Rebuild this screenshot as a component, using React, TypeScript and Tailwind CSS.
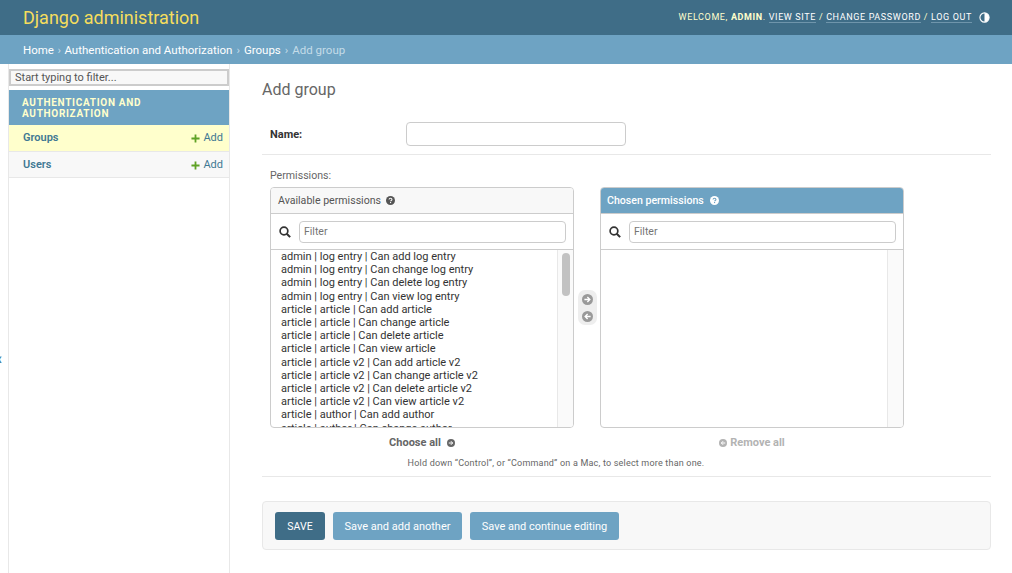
import React from 'react';

const PERMISSIONS = [
    'admin | log entry | Can add log entry',
    'admin | log entry | Can change log entry',
    'admin | log entry | Can delete log entry',
    'admin | log entry | Can view log entry',
    'article | article | Can add article',
    'article | article | Can change article',
    'article | article | Can delete article',
    'article | article | Can view article',
    'article | article v2 | Can add article v2',
    'article | article v2 | Can change article v2',
    'article | article v2 | Can delete article v2',
    'article | article v2 | Can view article v2',
    'article | author | Can add author',
    'article | author | Can change author',
];

const HelpIcon = ({ className }: { className: string }) => (
    <svg viewBox="0 0 16 16" className={className}>
        <circle cx="8" cy="8" r="8" fill="currentColor" />
        <path d="M5.4 6.2C5.5 4.7 6.6 4 8 4c1.5 0 2.6.8 2.6 2.1 0 1.9-2.2 1.8-2.2 3.3" fill="none" stroke="var(--hole)" strokeWidth="1.9" />
        <rect x="7.1" y="10.6" width="2" height="2" fill="var(--hole)" />
    </svg>
);

const ArrowCircle = ({ dir, className }: { dir: 'right' | 'left'; className: string }) => (
    <svg viewBox="0 0 16 16" className={className}>
        <circle cx="8" cy="8" r="8" fill="currentColor" />
        <path
            d={dir === 'right' ? 'M3.5 8h7.5M7.8 4.4 11.4 8l-3.6 3.6' : 'M12.5 8H5M8.2 4.4 4.6 8l3.6 3.6'}
            fill="none"
            stroke="#ffffff"
            strokeWidth="2"
        />
    </svg>
);

const SearchIcon = () => (
    <svg viewBox="0 0 14 14" className="w-[12px] h-[12px] shrink-0 text-[#333]">
        <circle cx="5.8" cy="5.8" r="4.5" fill="none" stroke="currentColor" strokeWidth="2" />
        <path d="M9 9l4 4" fill="none" stroke="currentColor" strokeWidth="2.4" />
    </svg>
);

const PlusIcon = () => (
    <svg viewBox="0 0 10 10" className="w-[9px] h-[9px]">
        <path d="M5 .5v9M.5 5h9" fill="none" stroke="#5fa225" strokeWidth="2" />
    </svg>
);

const NavRow = ({ name, active }: { name: string; active?: boolean }) => (
    <div className={`flex items-center justify-between pl-[14px] pr-[6px] border-b border-[#e8e8e8] text-[11px] ${active ? 'h-[27px] bg-[#ffffcc]' : 'h-[26px] pt-[1px] bg-[#f8f8f8]'}`}>
        <span className="font-semibold text-[#417893]">{name}</span>
        <span className="flex items-center gap-[3px] text-[#417893]">
            <PlusIcon />
            Add
        </span>
    </div>
);

const FilterRow = () => (
    <div className="flex items-center h-[36px] pl-[8px] pr-[7px] gap-[8px] border-b border-[#cccccc]">
        <SearchIcon />
        <div className="flex-1 h-[22px] flex items-center pl-[4px] border border-[#cccccc] rounded-[4px] text-[10.5px] text-[#757575]">Filter</div>
    </div>
);

const Scrollbar = ({ thumb }: { thumb?: boolean }) => (
    <div className="w-[16px] shrink-0 bg-[#fafafa] border-l border-[#e8e8e8] pt-[3px] pl-[4px]">
        {thumb && <div className="w-[8px] h-[43px] rounded-full bg-[#c2c2c2]" />}
    </div>
);

export default function App() {
    return (
        <div className="h-screen overflow-hidden bg-white text-[#333] font-['Roboto','Liberation_Sans',sans-serif] flex flex-col">
            <header className="h-[35px] shrink-0 bg-[#3f6d87] flex items-center justify-between pl-[23px] pr-[22px]">
                <div className="text-[18px] text-[#f5dd5d] leading-none">Django administration</div>
                <div className="flex items-center gap-[7px] text-[9px] tracking-[0.63px] text-[#ffffcc] uppercase">
                    <div>
                        Welcome, <b className="font-bold">admin</b>.{' '}
                        <span className="text-white border-b border-[#6f95ab]">View site</span> /{' '}
                        <span className="text-white border-b border-[#6f95ab]">Change password</span> /{' '}
                        <span className="text-white border-b border-[#6f95ab]">Log out</span>
                    </div>
                    <svg viewBox="0 0 12 12" className="w-[11px] h-[11px]">
                        <circle cx="6" cy="6" r="5" fill="none" stroke="#ffffff" strokeWidth="1.2" />
                        <path d="M6 1a5 5 0 0 1 0 10z" fill="#ffffff" />
                    </svg>
                </div>
            </header>

            <div className="h-[29px] shrink-0 bg-[#6ea3c3] flex items-center pl-[23px] pt-[2px] text-[11.5px] text-[#c4dce8]">
                <span className="text-white">Home</span>
                <span className="mx-[3.5px]">›</span>
                <span className="text-white">Authentication and Authorization</span>
                <span className="mx-[4px]">›</span>
                <span className="text-white">Groups</span>
                <span className="mx-[4px]">›</span>
                <span>Add group</span>
            </div>

            <div className="flex flex-1 min-h-0">
                <div className="relative w-[9px] shrink-0 border-r border-[#e8e8e8]">
                    <span className="absolute left-[-3px] top-[286px] text-[16px] font-bold leading-[18px] text-[#447e9b]">‹</span>
                </div>

                <aside className="w-[221px] shrink-0 border-r border-[#e8e8e8] pt-[5px]">
                    <div className="h-[17px] flex items-center pl-[4px] pt-[1px] bg-[#f8f8f8] border-2 border-[#cccccc] text-[11px] text-[#555]">Start typing to filter...</div>
                    <div className="mt-[4px] h-[35px] bg-[#6ea3c3] pl-[13px] pr-[60px] flex items-center text-[10px] leading-[11px] font-bold tracking-[0.7px] text-[#ffffcc] uppercase">
                        Authentication and Authorization
                    </div>
                    <NavRow name="Groups" active />
                    <NavRow name="Users" />
                </aside>

                <main className="flex-1 min-w-0 pl-[32px] pr-[21px]">
                    <h1 className="mt-[16px] text-[16px] leading-[20px] text-[#666]">Add group</h1>

                    <div className="mt-[22px] h-[33px] flex items-start pl-[8px] border-b border-[#e8e8e8]">
                        <label className="w-[136px] mt-[6px] text-[11px] font-bold leading-[14px] text-[#333]">Name:</label>
                        <div className="w-[220px] h-[24px] border border-[#cccccc] rounded-[4px] bg-white" />
                    </div>

                    <div className="pl-[8px] pt-[14px] border-b border-[#e8e8e8] h-[322px]">
                        <div className="text-[10.6px] leading-[14px] text-[#666]">Permissions:</div>

                        <div className="mt-[4px] flex items-start">
                            <div className="w-[304px] h-[241px] shrink-0 border border-[#cccccc] rounded-[4px] flex flex-col overflow-hidden">
                                <div className="h-[26px] shrink-0 bg-[#f8f8f8] border-b border-[#cccccc] flex items-center pl-[7px] gap-[5px] text-[10.6px] text-[#555]">
                                    Available permissions
                                    <span className="[--hole:#f8f8f8] text-[#555]"><HelpIcon className="w-[9px] h-[9px]" /></span>
                                </div>
                                <FilterRow />
                                <div className="flex flex-1 min-h-0">
                                    <div className="flex-1 overflow-hidden pl-[10px] text-[11px] leading-[13.2px] text-[#333] whitespace-nowrap">
                                        {PERMISSIONS.map(p => (
                                            <div key={p}>{p}</div>
                                        ))}
                                    </div>
                                    <Scrollbar thumb />
                                </div>
                            </div>

                            <div className="w-[26px] shrink-0 mt-[103px] flex justify-center">
                                <div className="w-[19px] h-[35px] rounded-[7px] bg-[#eeeeee] flex flex-col items-center justify-center gap-[6px] text-[#999]">
                                    <ArrowCircle dir="right" className="w-[11px] h-[11px]" />
                                    <ArrowCircle dir="left" className="w-[11px] h-[11px]" />
                                </div>
                            </div>

                            <div className="w-[304px] h-[241px] shrink-0 border border-[#cccccc] rounded-[4px] flex flex-col overflow-hidden">
                                <div className="h-[26px] shrink-0 bg-[#6ea3c3] border-b border-[#cccccc] flex items-center pl-[6px] gap-[6px] text-[10.6px] font-medium text-white">
                                    Chosen permissions
                                    <span className="[--hole:#6ea3c3] text-white"><HelpIcon className="w-[9px] h-[9px]" /></span>
                                </div>
                                <FilterRow />
                                <div className="flex flex-1 min-h-0">
                                    <div className="flex-1" />
                                    <Scrollbar />
                                </div>
                            </div>
                        </div>

                        <div className="mt-[8px] flex items-center h-[14px] text-[11px] font-bold">
                            <div className="w-[304px] flex items-center justify-center gap-[6px] text-[#666]">
                                Choose all
                                <ArrowCircle dir="right" className="w-[8px] h-[8px]" />
                            </div>
                            <div className="w-[26px]" />
                            <div className="w-[304px] flex items-center justify-center gap-[3px] text-[#b3b3b3]">
                                <ArrowCircle dir="left" className="w-[8px] h-[8px]" />
                                Remove all
                            </div>
                        </div>

                        <div className="mt-[7px] w-[572px] text-center text-[9px] leading-[12px] tracking-[0.2px] text-[#666]">
                            Hold down “Control”, or “Command” on a Mac, to select more than one.
                        </div>
                    </div>

                    <div className="mt-[24px] h-[49px] flex items-center gap-[8px] pl-[12px] bg-[#f8f8f8] border border-[#e8e8e8] rounded-[4px]">
                        <button className="h-[28px] w-[50px] pt-[3px] rounded-[3px] bg-[#3f6d87] text-white text-[10.5px]">SAVE</button>
                        <button className="h-[28px] w-[129px] pt-[3px] rounded-[3px] bg-[#6ea3c3] text-white text-[11px]">Save and add another</button>
                        <button className="h-[28px] w-[149px] pt-[3px] rounded-[3px] bg-[#6ea3c3] text-white text-[11px]">Save and continue editing</button>
                    </div>
                </main>
            </div>
        </div>
    );
}
